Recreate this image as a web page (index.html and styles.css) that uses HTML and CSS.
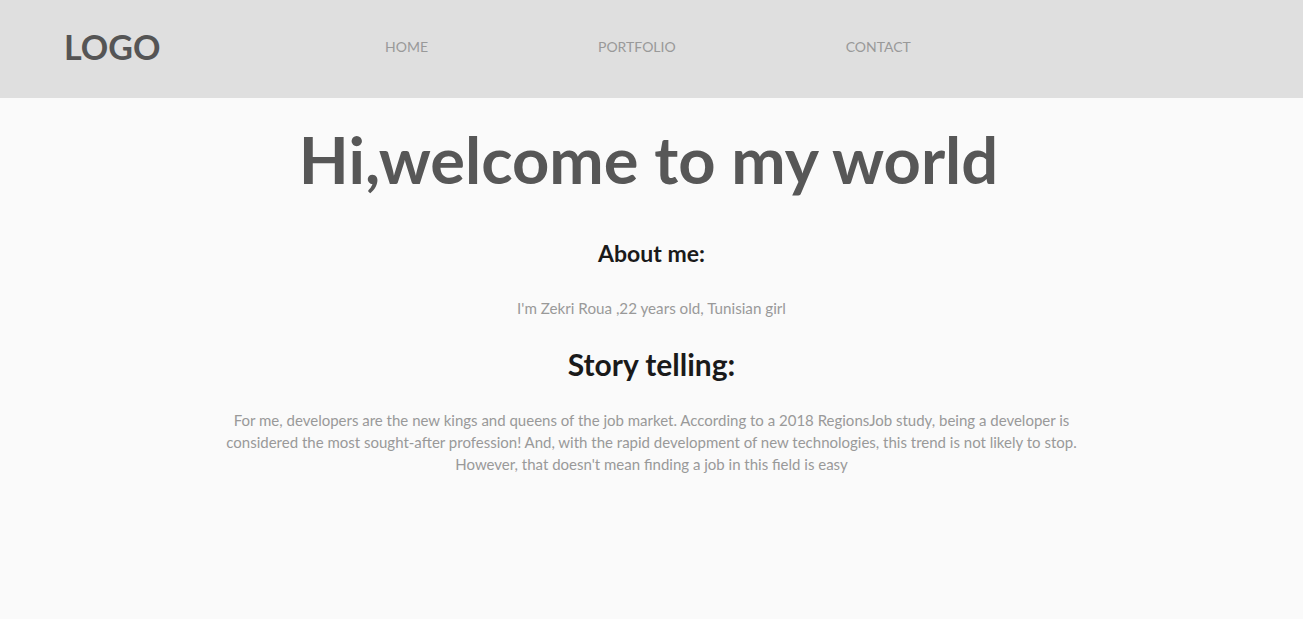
FILE: index.html
```html
<!DOCTYPE html>
<html lang="en">
<head>
<meta charset="utf-8">
<title>My world</title>
<link rel="stylesheet" href="styles.css">
</head>
<body>
<header class="header">
  <div class="logo">LOGO</div>
  <nav class="nav">
    <a href="#" class="nav-link">HOME</a>
    <a href="#" class="nav-link">PORTFOLIO</a>
    <a href="#" class="nav-link">CONTACT</a>
  </nav>
</header>
<main class="main">
  <h1 class="title">Hi,welcome to my world</h1>
  <h2 class="about-title">About me:</h2>
  <p class="about-text">I'm Zekri Roua ,22 years old, Tunisian girl</p>
  <h2 class="story-title">Story telling:</h2>
  <p class="story-text">For me, developers are the new kings and queens of the job market. According to a 2018 RegionsJob study, being a developer is considered the most sought-after profession! And, with the rapid development of new technologies, this trend is not likely to stop. However, that doesn't mean finding a job in this field is easy</p>
</main>
</body>
</html>
```
FILE: styles.css
```css
* { box-sizing: border-box; }
body {
  margin: 0;
  background: #fafafa;
  font-family: Lato, "Open Sans", sans-serif;
}
.header {
  height: 98px;
  background: #dfdfdf;
  display: flex;
  align-items: center;
  padding-left: 64px;
  padding-bottom: 6px;
}
.logo {
  font-size: 34px;
  font-weight: 700;
  color: #555;
  width: 321px;
}
.nav {
  display: flex;
  gap: 170px;
}
.nav-link {
  font-size: 14px;
  color: #999;
  text-decoration: none;
}
.main {
  text-align: center;
}
.title {
  margin: 22px 0 0;
  padding-right: 6px;
  font-size: 65px;
  font-weight: 700;
  color: #575757;
  line-height: 78px;
}
.about-title {
  margin: 41px 0 0;
  font-size: 23px;
  font-weight: 700;
  color: #1a1a1a;
}
.about-text {
  margin: 32px 0 0;
  font-size: 15.2px;
  color: #999;
}
.story-title {
  margin: 29px 0 0;
  font-size: 30px;
  font-weight: 700;
  color: #1a1a1a;
}
.story-text {
  margin: 27px auto 0;
  width: 870px;
  font-size: 15px;
  line-height: 22px;
  color: #999;
}
```
